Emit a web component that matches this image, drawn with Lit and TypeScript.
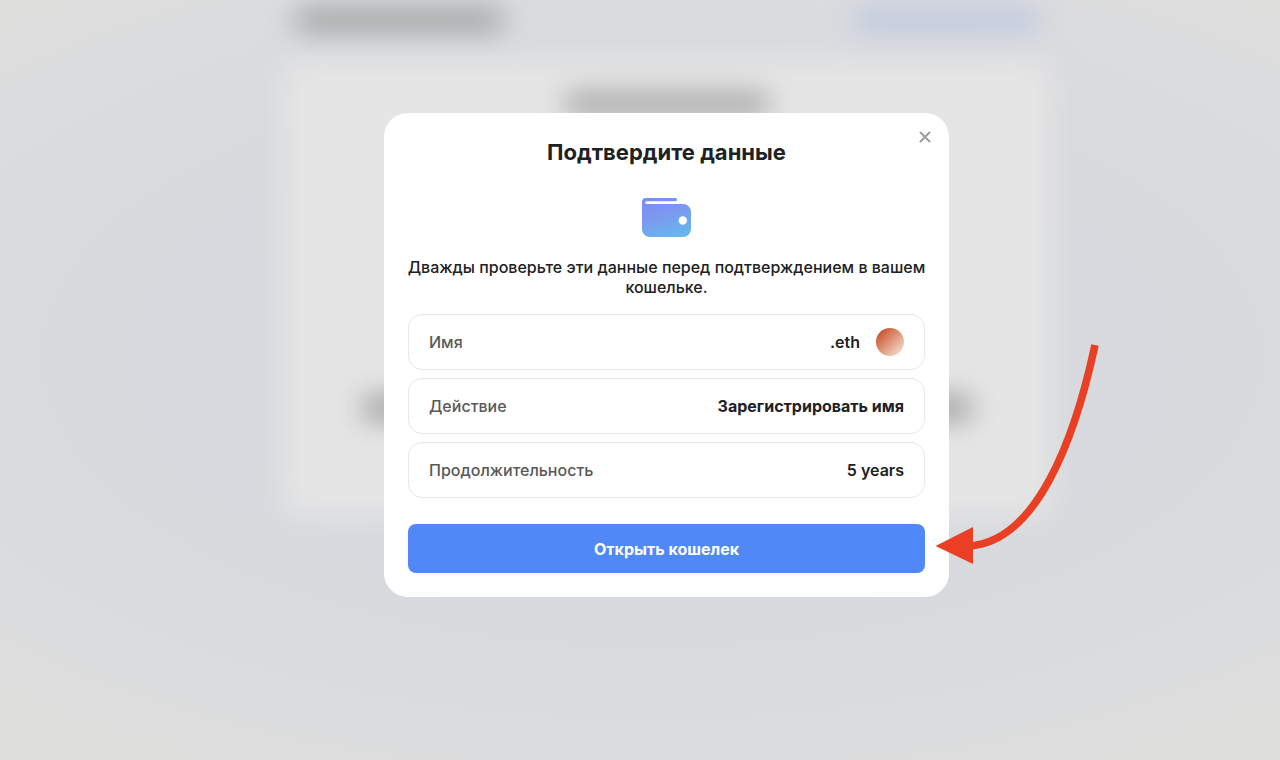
import { LitElement, html, css, svg } from "lit";
import { customElement, state } from "lit/decorators.js";

interface Detail {
  label: string;
  value: string;
  avatar?: boolean;
  latin?: boolean;
}

const details: Detail[] = [
  { label: "Имя", value: ".eth", avatar: true, latin: true },
  { label: "Действие", value: "Зарегистрировать имя" },
  { label: "Продолжительность", value: "5 years", latin: true },
];

/** Blurred registration page that lies under the dialog. */
@customElement("page-backdrop")
export class PageBackdrop extends LitElement {
  static styles = css`
    :host {
      display: block;
      overflow: hidden;
      background: radial-gradient(ellipse 75% 60% at 51% 47%, #d7d9de 0%, #d8dade 62%, #dbdcde 85%, #dededd 100%);
    }
    .page {
      box-sizing: border-box;
      width: 60%;
      margin: 0 auto;
      transform: translateX(27px);
      filter: blur(14px);
    }
    .top {
      display: flex;
      align-items: center;
      justify-content: space-between;
      height: 40px;
      padding: 0 12px;
    }
    .name {
      width: 208px;
      height: 24px;
      border-radius: 8px;
      background: #a0a1a1;
    }
    .link {
      width: 184px;
      height: 24px;
      border-radius: 8px;
      background: #bdc8df;
    }
    .card {
      display: flex;
      flex-direction: column;
      align-items: center;
      gap: 280px;
      box-sizing: border-box;
      height: 456px;
      margin-top: 20px;
      padding: 32px 80px;
      border-radius: 16px;
      background: #e5e5e5;
    }
    .heading {
      width: 202px;
      height: 24px;
      background: #a6a6a6;
    }
    .line {
      width: 100%;
      height: 24px;
      background: #9c9c9c;
    }
  `;

  render() {
    return html`
      <div class="page">
        <div class="top">
          <div class="name"></div>
          <div class="link"></div>
        </div>
        <div class="card">
          <div class="heading"></div>
          <div class="line"></div>
        </div>
      </div>
    `;
  }
}

const walletIcon = svg`
  <svg class="wallet" viewBox="0 0 49 39" width="49" height="39" aria-hidden="true">
    <defs>
      <linearGradient id="wallet-fill" x1="14" y1="0" x2="28" y2="42" gradientUnits="userSpaceOnUse">
        <stop offset="0" stop-color="#7c8cf7" />
        <stop offset="0.4" stop-color="#7c98f0" />
        <stop offset="1" stop-color="#66b8ec" />
      </linearGradient>
    </defs>
    <path
      fill="url(#wallet-fill)"
      fill-rule="evenodd"
      d="M4 0H33.5a1.5 1.5 0 0 1 0 3.2H4.6a1.4 1.4 0 0 0 0 2.8H41a8 8 0 0 1 8 8v17a8 8 0 0 1-8 8H8a8 8 0 0 1-8-8V4a4 4 0 0 1 4-4Z"
    />
    <circle cx="40.8" cy="22.5" r="4.2" fill="#fff" />
  </svg>
`;

@customElement("app-root")
export class AppRoot extends LitElement {
  static styles = css`
    :host {
      display: grid;
      min-height: 100vh;
      font-family: Inter, "Liberation Sans", sans-serif;
      color: #202122;
    }
    page-backdrop,
    .overlay {
      grid-area: 1 / 1;
      min-width: 0;
    }
    .overlay {
      display: grid;
      place-items: center;
      position: relative;
      padding: 0 0 50px 53px;
    }
    .dialog {
      position: relative;
      box-sizing: border-box;
      width: 565px;
      max-width: 100%;
      padding: 24px;
      border-radius: 24px;
      background: #fff;
    }
    .title {
      margin: 0;
      font-size: 22px;
      line-height: 30px;
      font-weight: 700;
      text-align: center;
    }
    .wallet {
      display: block;
      margin: 31px auto 20px;
    }
    .note {
      margin: 0 -8px;
      font-size: 16px;
      line-height: 20px;
      font-weight: 500;
      text-align: center;
    }
    .rows {
      display: grid;
      gap: 8px;
      margin: 17px 0 26px;
    }
    .row {
      display: flex;
      align-items: center;
      justify-content: space-between;
      box-sizing: border-box;
      height: 56px;
      padding: 0 20px;
      border: 1px solid #e8e8e8;
      border-radius: 14px;
      font-size: 16px;
      line-height: 20px;
    }
    dt {
      color: #595959;
      font-weight: 500;
    }
    dd {
      display: flex;
      align-items: center;
      gap: 16px;
      margin: 0;
      font-weight: 700;
    }
    .latin {
      font-weight: 600;
    }
    .avatar {
      width: 28px;
      height: 28px;
      border-radius: 50%;
      background: linear-gradient(135deg, #cb5130 12%, #dd9276 48%, #efd9c8 88%);
    }
    .confirm {
      display: block;
      width: 100%;
      height: 49px;
      padding: 0;
      border: 0;
      border-radius: 8px;
      background: #5088f7;
      color: #fff;
      font: 700 16px/20px Inter, "Liberation Sans", sans-serif;
      cursor: pointer;
    }
    .close {
      position: absolute;
      top: 12px;
      right: 12px;
      display: grid;
      place-items: center;
      width: 24px;
      height: 24px;
      padding: 0;
      border: 0;
      background: none;
      color: #9b9ba7;
      cursor: pointer;
    }
    .arrow {
      position: absolute;
      left: 551px;
      top: 231px;
      pointer-events: none;
    }
  `;

  @state() private open = true;

  render() {
    return html`
      <page-backdrop aria-hidden="true"></page-backdrop>
      ${this.open
        ? html`<div class="overlay">
            <section class="dialog" role="dialog" aria-modal="true" aria-labelledby="title">
              <button class="close" type="button" aria-label="Закрыть" @click=${() => (this.open = false)}>
                <svg width="12" height="12" viewBox="0 0 12 12" fill="none" stroke="currentColor" stroke-width="2" stroke-linecap="round">
                  <path d="M1.500 1.500l9 9M10.500 1.500l-9 9" />
                </svg>
              </button>
              <h1 class="title" id="title">Подтвердите данные</h1>
              ${walletIcon}
              <p class="note">Дважды проверьте эти данные перед подтверждением в вашем кошельке.</p>
              <dl class="rows">
                ${details.map(
                  (d) => html`<div class="row">
                    <dt>${d.label}</dt>
                    <dd class=${d.latin ? "latin" : ""}>${d.value}${d.avatar ? html`<span class="avatar"></span>` : null}</dd>
                  </div>`
                )}
              </dl>
              <button class="confirm" type="button">Открыть кошелек</button>
              <svg class="arrow" width="166" height="222" viewBox="0 0 166 222" aria-hidden="true">
                <path d="M160 1C140 94 102 198 34 202" fill="none" stroke="#e94025" stroke-width="7.6" />
                <path d="M0.500 202L38 183V220Z" fill="#e94025" />
              </svg>
            </section>
          </div>`
        : null}
    `;
  }
}
